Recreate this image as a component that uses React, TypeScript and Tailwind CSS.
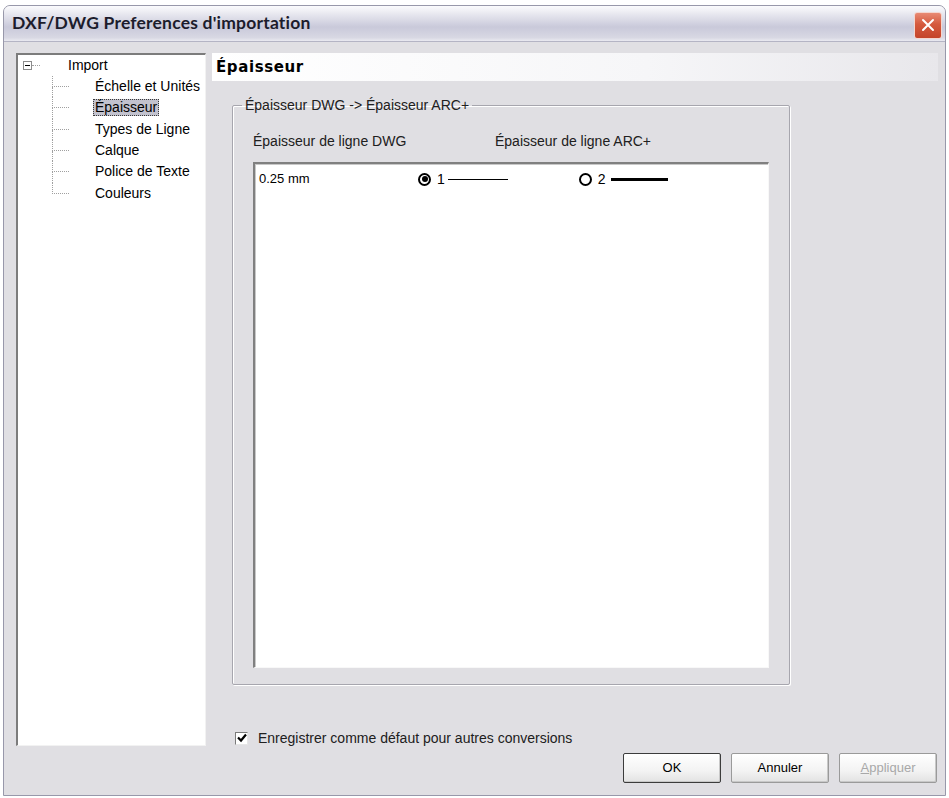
import React, { useState } from 'react';

type Node = { id: string; label: string };

const children: Node[] = [
  { id: 'echelle', label: 'Échelle et Unités' },
  { id: 'epaisseur', label: 'Épaisseur' },
  { id: 'types', label: 'Types de Ligne' },
  { id: 'calque', label: 'Calque' },
  { id: 'police', label: 'Police de Texte' },
  { id: 'couleurs', label: 'Couleurs' },
];

const Radio: React.FC<{ checked: boolean }> = ({ checked }) => (
  <span className="w-[13px] h-[13px] rounded-full border-[2px] border-black bg-white flex items-center justify-center">
    {checked && <span className="w-[6px] h-[6px] rounded-full bg-black" />}
  </span>
);

const Button: React.FC<{ label: React.ReactNode; primary?: boolean; disabled?: boolean }> = ({ label, primary, disabled }) => (
  <button
    className={`w-[98px] h-[30px] rounded-[2px] text-[13px] bg-[linear-gradient(180deg,#ffffff_0%,#f3f3f3_60%,#e2e2e2_100%)] shadow-[inset_-1px_-1px_0_#c8c8c8] ${
      primary ? 'border border-[#3c3c3c]' : 'border border-[#9a9a9a]'
    } ${disabled ? 'text-[#a8a8a8]' : 'text-black'}`}
  >
    {label}
  </button>
);

const App: React.FC = () => {
  const [selected, setSelected] = useState('epaisseur');
  const [saveDefault, setSaveDefault] = useState(true);

  return (
    <div className="w-[949px] h-[798px] bg-white pt-[5px] px-[3px] pb-[2px] font-['Liberation_Sans',Arial,sans-serif]">
      <div className="h-full flex flex-col rounded-t-[7px] border border-[#9898aa] bg-[#e0dfe3] overflow-hidden">
        {/* title bar */}
        <div className="h-[36px] shrink-0 flex items-center justify-between pl-[8px] pr-[3px] border-b border-[#b4b4c4] bg-[linear-gradient(180deg,#fbfbfd_0%,#e6e6ee_25%,#c9c9da_60%,#d8d8e3_90%,#e9e9f0_100%)]">
          <span className="font-['Lato',sans-serif] font-bold text-[17.5px] text-[#1c1c2c] tracking-[0.2px]">
            DXF/DWG Preferences d'importation
          </span>
          <button className="w-[28px] h-[27px] mt-[3px] rounded-[3px] border border-[#f4d6cf] bg-[linear-gradient(180deg,#e88a74_0%,#d55a3e_45%,#c4442a_100%)] flex items-center justify-center">
            <svg width="16" height="16" viewBox="0 0 16 16">
              <path d="M3 3 L13 13 M13 3 L3 13" stroke="white" strokeWidth="2" strokeLinecap="round" />
            </svg>
          </button>
        </div>

        {/* body */}
        <div className="flex-1 flex flex-col pt-[11px] pl-[12px] pr-[7px] pb-[12px]">
          <div className="flex gap-[6px] h-[693px]">
            {/* tree */}
            <div className="w-[190px] h-full bg-white border-t-2 border-l-2 border-[#7c7c7c] border-r border-b border-r-[#f2f2f2] border-b-[#f2f2f2] text-[14px] text-black">
              <div className="flex items-center h-[21px]">
                <span className="ml-[5px] w-[9px] h-[9px] border border-[#8c8c8c] bg-white flex items-center justify-center">
                  <span className="w-[5px] h-[1px] bg-black" />
                </span>
                <span className="w-[8px] border-t border-dotted border-[#a0a0a0]" />
                <span className="ml-[28px]">Import</span>
              </div>
              <div>
                {children.map((n, i) => {
                  const last = i === children.length - 1;
                  const isSel = selected === n.id;
                  return (
                    <div key={n.id} className="flex items-stretch h-[21.3px] ml-[34px]" onClick={() => setSelected(n.id)}>
                      <div className="w-[17px] flex flex-col">
                        <div className="flex-1 border-l border-b border-dotted border-[#a0a0a0]" />
                        <div className={`flex-1 ${last ? '' : 'border-l border-dotted border-[#a0a0a0]'}`} />
                      </div>
                      <div className="ml-[24px] flex items-center">
                        <span
                          className={`px-[1px] leading-[15px] border border-dotted ${
                            isSel ? 'bg-[#c2c2ce] border-[#3a3a3a]' : 'border-transparent'
                          }`}
                        >
                          {n.label}
                        </span>
                      </div>
                    </div>
                  );
                })}
              </div>
            </div>

            {/* right pane */}
            <div className="flex-1 flex flex-col">
              <div className="h-[28px] shrink-0 flex items-center pl-[4px] bg-[linear-gradient(90deg,#ffffff_0%,#f6f6f8_60%,#e8e7eb_100%)]">
                <span className="font-['DejaVu_Sans',sans-serif] font-bold text-[15px] tracking-[0.6px] text-black">Épaisseur</span>
              </div>

              <fieldset className="mt-[17px] ml-[20px] w-[558px] h-[587px] border border-[#a7a6ae] rounded-[2px] shadow-[inset_1px_1px_0_#ffffff,1px_1px_0_#ffffff]">
                <legend className="ml-[9px] px-[3px] text-[14px] leading-[14px] text-[#202020]">
                  Épaisseur DWG -&gt; Épaisseur ARC+
                </legend>
                <div className="px-[20px]">
                  <div className="flex pt-[21px] text-[14px] leading-[16px] text-[#202020]">
                    <span className="w-[242px]">Épaisseur de ligne DWG</span>
                    <span>Épaisseur de ligne ARC+</span>
                  </div>
                  <div className="mt-[13px] h-[506px] bg-white border-t-2 border-l-2 border-[#808080] border-r border-b border-r-[#f8f8f8] border-b-[#f8f8f8] shadow-[inset_1px_1px_0_#c8c8c8]">
                    <div className="flex items-center h-[16px] mt-[7px] pl-[4px] text-[14px] text-black">
                      <span className="w-[159px] text-[13px]">0.25 mm</span>
                      <Radio checked />
                      <span className="ml-[6px]">1</span>
                      <span className="ml-[3px] w-[60px] h-[1px] bg-black" />
                      <span className="ml-[71px]">
                        <Radio checked={false} />
                      </span>
                      <span className="ml-[6px]">2</span>
                      <span className="ml-[5px] w-[57px] h-[3px] bg-black" />
                    </div>
                  </div>
                </div>
              </fieldset>

              <label className="mt-auto ml-[23px] h-[16px] flex items-center text-[14px] text-[#202020]" onClick={() => setSaveDefault(!saveDefault)}>
                <span className="w-[13px] h-[13px] bg-white border border-[#7a7a7a] border-r-[#e6e6e6] border-b-[#e6e6e6] flex items-center justify-center">
                  {saveDefault && (
                    <svg width="10" height="10" viewBox="0 0 10 10">
                      <path d="M1 4.5 L4 7.5 L9 1.5" stroke="black" strokeWidth="2.2" fill="none" />
                    </svg>
                  )}
                </span>
                <span className="ml-[10px]">Enregistrer comme défaut pour autres conversions</span>
              </label>
            </div>
          </div>

          {/* dialog buttons */}
          <div className="mt-[7px] flex justify-end gap-[10px] pr-[1px]">
            <Button label="OK" primary />
            <Button label="Annuler" />
            <Button label={<><span className="underline">A</span>ppliquer</>} disabled />
          </div>
        </div>
      </div>
    </div>
  );
};

export default App;
